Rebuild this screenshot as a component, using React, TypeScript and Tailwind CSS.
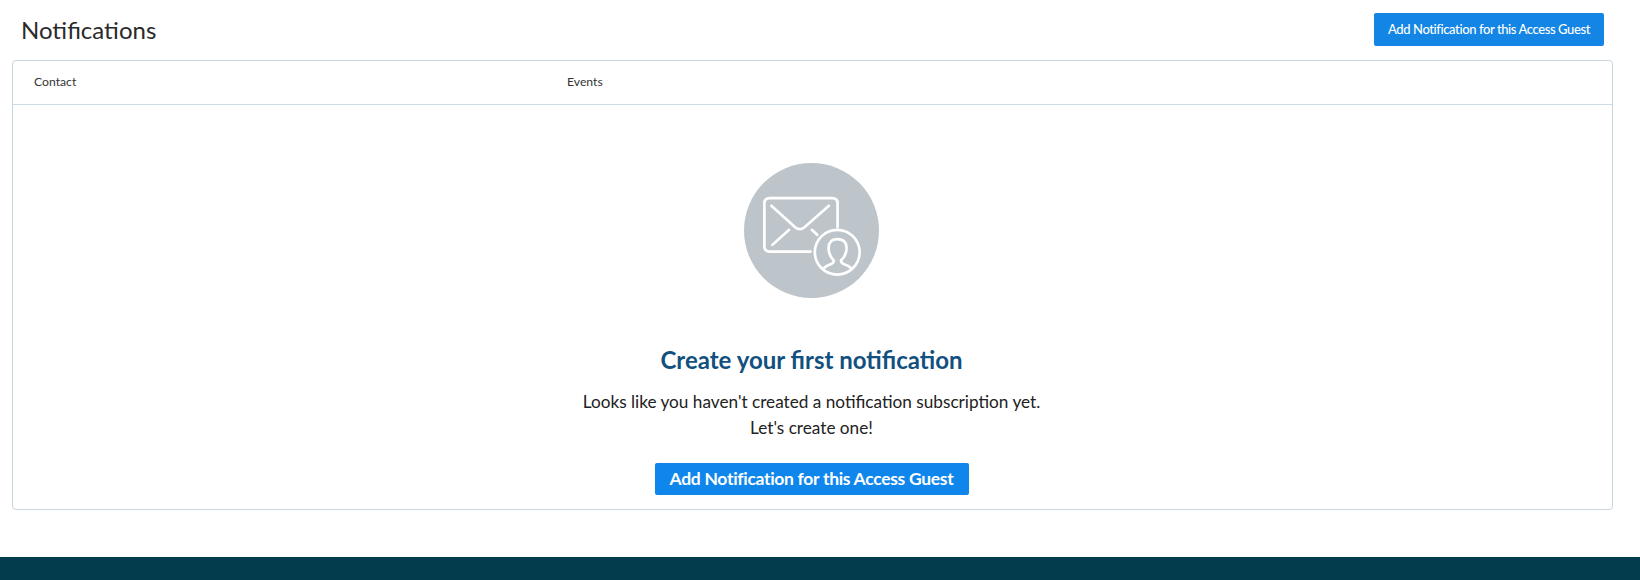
import React from "react";

const font = { fontFamily: '"Lato", "Open Sans", sans-serif' };

// Envelope with a person badge, coordinates taken from a 3x crop of the circle
function MailUserIcon() {
    return (
        <svg viewBox="73 40 404 404" className="w-[135px] h-[135px] block">
            <circle cx="275" cy="242" r="202" fill="#bdc4ca" />
            <g fill="none" stroke="#fff" strokeWidth="8" strokeLinecap="round" strokeLinejoin="round">
                <path d="M272 305 H150 Q134 305 134 289 V161 Q134 145 150 145 H337 Q353 145 353 161 V232" />
                <path d="M155 168 L226 232 Q240 244 254 232 L327 168" />
                <path d="M158 285 L208 240" />
                <path d="M276 240 L292 255" />
                <circle cx="352" cy="307" r="67" />
                <path d="M311 356 Q318 347 334 342 Q342 339 342 332 Q326 316 326 296 Q326 268 352 268 Q380 268 380 296 Q380 316 363 332 Q363 339 371 342 Q387 347 395 356" />
            </g>
        </svg>
    );
}

export default function App() {
    return (
        <div className="h-[580px] bg-white flex flex-col overflow-hidden text-[#2b2b2b]" style={font}>
            <div className="h-[60px] flex items-start justify-between pl-[21px] pr-[36px]">
                <h1 className="text-[24px] leading-[36px] mt-[12px] font-normal text-[#2a2a2a]">Notifications</h1>
                <button className="mt-[13px] w-[230px] h-[33px] bg-[#1385e5] rounded-[2px] text-white text-[13px] tracking-[-0.4px] font-medium whitespace-nowrap">
                    Add Notification for this Access Guest
                </button>
            </div>

            <div className="ml-[12px] mr-[27px] h-[450px] border border-[#c9d6df] rounded-[4px] flex flex-col">
                <div className="h-[44px] border-b border-[#c9dbe6] flex items-center text-[12.2px] text-[#333]">
                    <div className="w-[554px] pl-[21px]">Contact</div>
                    <div>Events</div>
                </div>

                {/* empty state */}
                <div className="flex flex-col items-center pr-[2px]">
                    <div className="mt-[58px]">
                        <MailUserIcon />
                    </div>
                    <h2 className="mt-[44px] text-[24px] leading-[36px] font-bold text-[#12507f]">Create your first notification</h2>
                    <p className="mt-[11px] text-[17.2px] leading-[26px] text-center text-[#222]">
                        Looks like you haven't created a notification subscription yet.
                        <br />
                        Let's create one!
                    </p>
                    <button className="mt-[22px] w-[314px] h-[32px] bg-[#0e86ec] rounded-[2px] text-white text-[17.5px] tracking-[-0.3px] font-bold whitespace-nowrap">
                        Add Notification for this Access Guest
                    </button>
                </div>
            </div>

            <div className="mt-[47px] flex-1 bg-[#033d4d]" />
        </div>
    );
}
